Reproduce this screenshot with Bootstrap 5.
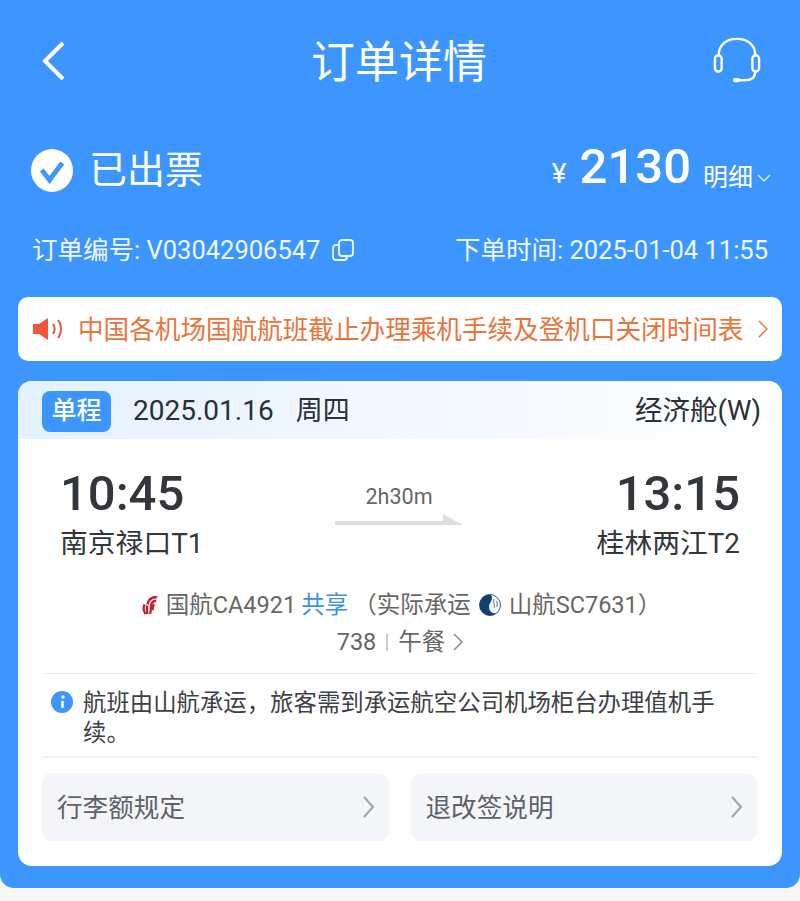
<!DOCTYPE html>
<html lang="zh-CN">
<head>
    <meta charset="UTF-8">
    <meta name="viewport" content="width=device-width, initial-scale=1.0">
    <title>订单详情</title>
    <link href="https://cdn.jsdelivr.net/npm/bootstrap@5.3.0/dist/css/bootstrap.min.css" rel="stylesheet">
    <style>
        body { background: #f6f6f6; font-family: Roboto, "Noto Sans CJK SC", sans-serif; height: 901px; overflow: hidden; color: #2b2f36; }
        .hero { background: #3d96fd; height: 888px; border-radius: 0 0 14px 14px; padding: 0 18px; color: #fff; }
        .topbar { height: 121px; padding: 0 20px 0 23px; }
        .back-side { width: 45px; }
        .help-side { width: 50px; }
        .page-title { font-size: 44px; line-height: 1; padding-top: 5px; }
        .status-row { height: 98px; padding: 0 11px 0 13px; }
        .status-text { font-size: 38px; line-height: 1; }
        .yen { font-size: 28px; margin-right: 13px; padding-top: 8px; }
        .price { font-size: 49px; font-weight: 500; line-height: 1; margin-right: 12px; padding-bottom: 8px; }
        .detail-link { font-size: 25px; padding-top: 16px; }
        .meta-row { font-size: 25.5px; height: 44px; padding: 0 14px; margin-top: 9px; color: #eef6ff; }
        .copy-icon { margin-left: 3px; }
        .notice { height: 64px; margin-top: 25px; background: #fff; border-radius: 10px; padding: 0 14px; color: #e8743b; font-size: 25.6px; }
        .notice-text { margin-left: 14px; padding-top: 2px; }
        .flight-card { height: 485px; margin-top: 20px; background: #fff; border-radius: 14px; overflow: hidden; color: #2b2f36; }
        .card-head { height: 58px; padding: 2px 21px 0 24px; background: linear-gradient(90deg, #e5f1fe, #fff); font-size: 27.5px; }
        .trip-tag { background: #3d96fd; color: #fff; border-radius: 8px; width: 69px; height: 41px; margin-right: 22px; font-size: 25px; font-weight: 500; }
        .trip-date { font-size: 28px; }
        .weekday { font-size: 27px; margin-left: 22px; }
        .times { padding: 27px 42px 0 42px; height: 147px; }
        .clock { font-size: 49px; font-weight: 500; line-height: 56px; color: #33363b; }
        .airport { font-size: 27.8px; line-height: 36px; margin-top: 4px; color: #33363b; }
        .duration { width: 128px; color: #666; font-size: 21.6px; padding-top: 15px; margin-right: 2px; }
        .airline-row { font-size: 23.5px; line-height: 30px; color: #666; height: 38px; padding-left: 3px; }
        .share-link { color: #3d8fe8; margin: 0 5px 0 5px; }
        .plane-row { font-size: 23.5px; line-height: 36px; color: #666; height: 36px; margin-bottom: 13px; }
        .sep { width: 2px; height: 17px; background: #ccc; margin: 0 10px; }
        .info-row { margin: 0 24px; padding: 14px 32px 8px 9px; border-top: 1px solid #eeeeee; border-bottom: 2px solid #f3f3f3; font-size: 23.4px; line-height: 30px; color: #3d4046; gap: 10px; }
        .info-row svg { flex: none; margin-top: 3px; }
        .rule-btn { height: 68px; background: #f3f5f9; border-radius: 10px; padding: 0 14px 0 15px; font-size: 25.6px; color: #5f6166; }
        .rule-label { padding-top: 3px; }
        .rule-row { margin: 15px 25px 0 24px; gap: 22px; }
    </style>
</head>
<body>
    <div class="hero">
        <div class="topbar d-flex justify-content-between align-items-center">
            <div class="back-side"><svg class="d-block" width="26" height="40" viewBox="0 0 26 40" fill="none" stroke="#fff" stroke-width="4"><path d="M22 2 4 20l18 18"/></svg></div>
            <div class="page-title">订单详情</div>
            <div class="help-side"><svg class="d-block" width="50" height="48" viewBox="0 0 50 50" fill="none" stroke="#fff" stroke-width="2.500" stroke-linecap="round"><path d="M6 19C6 8 14 2 25 2s19 6 19 17"/><rect x="2" y="19" width="7" height="17" rx="3.500"/><rect x="41" y="19" width="7" height="17" rx="3.500"/><path d="M44 36c0 6-4 9-10 9h-6"/><rect x="22" y="44" width="5" height="2" rx="1"/></svg></div>
        </div>
        <div class="status-row d-flex justify-content-between align-items-center">
            <div class="d-flex align-items-center gap-3">
                <svg width="42" height="43" viewBox="0 0 43 43" preserveAspectRatio="none"><circle cx="21.500" cy="21.500" r="21.500" fill="#fff"/><path d="m11 21 8 10 13-17" fill="none" stroke="#3d96fd" stroke-width="5"/></svg>
                <div class="status-text">已出票</div>
            </div>
            <div class="d-flex align-items-center">
                <span class="yen">¥</span><span class="price">2130</span>
                <span class="detail-link d-flex align-items-center gap-1">明细<svg width="14" height="10" viewBox="0 0 14 10" fill="none" stroke="#dcecff" stroke-width="1.500"><path d="m1 2 6 6 6-6"/></svg></span>
            </div>
        </div>
        <div class="meta-row d-flex justify-content-between align-items-center">
            <div class="d-flex align-items-center gap-2">订单编号: V03042906547
                <svg class="copy-icon" width="24" height="24" viewBox="0 0 24 24" fill="none" stroke="#eef6ff" stroke-width="1.800"><rect x="8" y="2" width="14" height="16" rx="3"/><path d="M8 7H5a3 3 0 0 0-3 3v9a3 3 0 0 0 3 3h8a3 3 0 0 0 3-3v-1"/></svg>
            </div>
            <div>下单时间: 2025-01-04 11:55</div>
        </div>
        <div class="notice d-flex justify-content-between align-items-center">
            <svg width="32" height="24" viewBox="0 0 32 24"><path d="M1 7h6l9-6v22l-9-6H1z" fill="#f2553d"/><path d="M21 7c2 3 2 7 0 10M26 3c4 5 4 13 0 18" fill="none" stroke="#f2553d" stroke-width="2"/></svg>
            <span class="notice-text flex-grow-1">中国各机场国航航班截止办理乘机手续及登机口关闭时间表</span>
            <svg width="10" height="18" viewBox="0 0 10 18" fill="none" stroke="#e8743b" stroke-width="1.500"><path d="m1 1 8 8-8 8"/></svg>
        </div>
        <div class="flight-card">
            <div class="card-head d-flex align-items-center">
                <span class="trip-tag d-flex align-items-center justify-content-center">单程</span>
                <span class="trip-date">2025.01.16</span><span class="weekday">周四</span>
                <span class="ms-auto">经济舱(W)</span>
            </div>
            <div class="times d-flex justify-content-between align-items-start">
                <div>
                    <div class="clock">10:45</div>
                    <div class="airport">南京禄口T1</div>
                </div>
                <div class="duration text-center">
                    2h30m
                    <svg class="d-block" width="128" height="14" viewBox="0 0 128 14"><path d="M0 8h108V1l20 11H0z" fill="#dedede"/></svg>
                </div>
                <div class="text-end">
                    <div class="clock">13:15</div>
                    <div class="airport">桂林两江T2</div>
                </div>
            </div>
            <div class="airline-row d-flex justify-content-center align-items-center">
                <svg class="me-2" width="16" height="19" viewBox="0 0 18 20" preserveAspectRatio="none" fill="none" stroke="#c8202f" stroke-width="2.600"><path d="M17 1C10 1 7 4 6 9M16 5c-4 0-6 3-6 7 0 3 0 5-1 7M14 9c-2 1-2 3-2 6M3 9c-2 3-1 7 1 10M6 10c-1 3 0 6 0 9"/></svg>
                <span>国航CA4921</span><span class="share-link">共享</span>
                <span>（实际承运</span>
                <svg class="mx-2" width="22" height="22" viewBox="0 0 22 22"><circle cx="11" cy="11" r="10.500" fill="#f4f8fb" stroke="#123f72" stroke-width="0.800"/><path d="M11 .5a10.500 10.500 0 0 0 0 21c3 0 5-1 6-2-5 0-7-3-7-7 0-3 3-6 3-8 0-2-1-4-2-4z" fill="#123f72"/><path d="M15 5c-2 3 2 5 0 9M18 7c-1 2 1 3 0 6" fill="none" stroke="#7d9cb8" stroke-width="1.300"/></svg>
                <span>山航SC7631）</span>
            </div>
            <div class="plane-row d-flex justify-content-center align-items-center">
                <span>738</span><span class="sep"></span><span>午餐</span>
                <svg class="ms-2" width="10" height="18" viewBox="0 0 10 18" fill="none" stroke="#888" stroke-width="1.500"><path d="m1 1 8 8-8 8"/></svg>
            </div>
            <div class="info-row d-flex">
                <svg width="22" height="22" viewBox="0 0 22 22"><circle cx="11" cy="11" r="11" fill="#3d96fd"/><circle cx="12" cy="6" r="1.700" fill="#fff"/><path d="M11.500 10v7" stroke="#fff" stroke-width="2.500"/></svg>
                <div>航班由山航承运，旅客需到承运航空公司机场柜台办理值机手续。</div>
            </div>
            <div class="rule-row row g-0 flex-nowrap">
                <div class="col">
                    <div class="rule-btn d-flex justify-content-between align-items-center"><span class="rule-label">行李额规定</span><svg width="12" height="22" viewBox="0 0 12 22" fill="none" stroke="#a3a3a3" stroke-width="2"><path d="m1 1 9 10-9 10"/></svg></div>
                </div>
                <div class="col">
                    <div class="rule-btn d-flex justify-content-between align-items-center"><span class="rule-label">退改签说明</span><svg width="12" height="22" viewBox="0 0 12 22" fill="none" stroke="#a3a3a3" stroke-width="2"><path d="m1 1 9 10-9 10"/></svg></div>
                </div>
            </div>
        </div>
    </div>
    <script src="https://cdn.jsdelivr.net/npm/bootstrap@5.3.0/dist/js/bootstrap.bundle.min.js"></script>
</body>
</html>
